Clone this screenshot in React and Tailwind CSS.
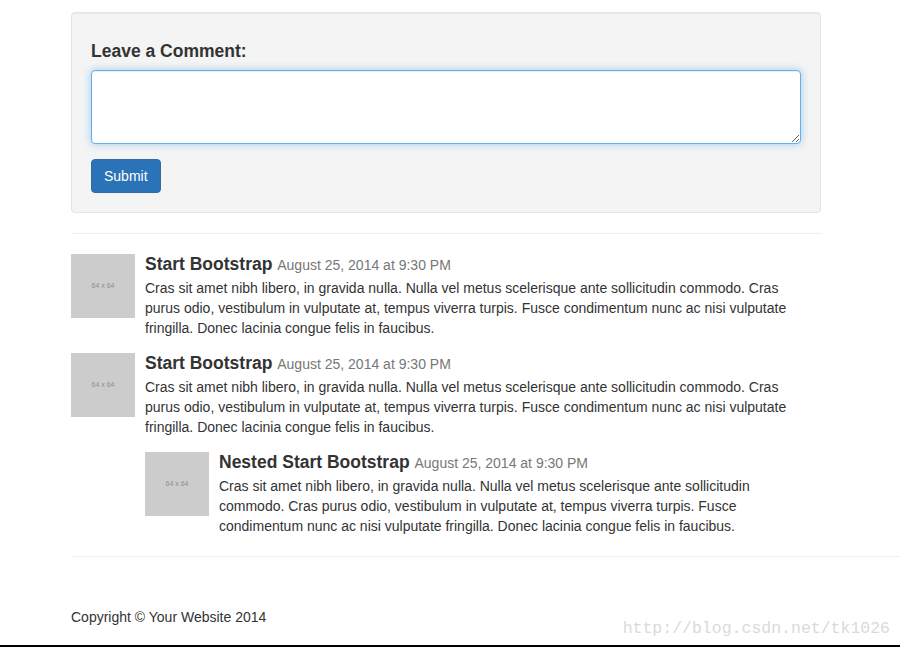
import React from 'react';

const text =
  'Cras sit amet nibh libero, in gravida nulla. Nulla vel metus scelerisque ante sollicitudin commodo. Cras purus odio, vestibulum in vulputate at, tempus viverra turpis. Fusce condimentum nunc ac nisi vulputate fringilla. Donec lacinia congue felis in faucibus.';

function Placeholder() {
  return (
    <div className="w-[64px] h-[64px] shrink-0 bg-[#cccccc] flex items-center justify-center text-[7px] text-[#8e8e8e]">
      64 x 64
    </div>
  );
}

function Comment({ name, children, className = '' }) {
  return (
    <div className={`flex gap-[10px] ${className}`}>
      <Placeholder />
      <div className="flex-1">
        <h4 className="text-[17.5px] leading-[20px] font-bold text-[#333] mb-[3px]">
          {name} <small className="text-[14px] font-normal text-[#777]">August 25, 2014 at 9:30 PM</small>
        </h4>
        <p className="pr-[16px] text-[14px] leading-[20px] text-[#333]">{text}</p>
        {children}
      </div>
    </div>
  );
}

export default function App() {
  return (
    <div
      className="w-[900px] h-[647px] relative overflow-hidden bg-white flex flex-col"
      style={{ fontFamily: '"Liberation Sans", Arial, sans-serif' }}
    >
      <div className="ml-[71px] w-[750px] pt-[12px]">
        {/* Comment form */}
        <div className="bg-[#f4f4f4] border border-[#e3e3e3] rounded-[4px] p-[19px] shadow-[inset_0_1px_1px_rgba(0,0,0,0.05)]">
          <h4 className="mt-[9px] mb-[9px] text-[17.5px] leading-[20px] font-bold text-[#333]">Leave a Comment:</h4>
          <textarea
            rows={3}
            className="block w-full h-[74px] bg-white border border-[#66afe9] rounded-[4px] shadow-[inset_0_1px_1px_rgba(0,0,0,0.075),0_0_8px_rgba(102,175,233,0.6)] outline-none"
          />
          <button className="mt-[15px] h-[34px] px-[12px] bg-[#2a73b6] border border-[#2e6da4] rounded-[4px] text-white text-[14px]">
            Submit
          </button>
        </div>

        <div className="mt-[20px] border-t border-[#eeeeee]" />

        {/* Comments */}
        <div className="mt-[20px]">
          <Comment name="Start Bootstrap" />
          <Comment name="Start Bootstrap" className="mt-[15px]">
            <Comment name="Nested Start Bootstrap" className="mt-[15px]" />
          </Comment>
        </div>
      </div>

      <div className="ml-[71px] mt-[20px] border-t border-[#eeeeee]" />

      <footer className="ml-[71px] mt-[50px] text-[14px] leading-[20px] text-[#333]">
        Copyright © Your Website 2014
      </footer>

      <div className="mt-auto h-[2px] bg-black" />

      <div
        className="absolute right-[10px] bottom-[5px] text-[16.5px] text-[#dcdad6]"
        style={{ fontFamily: '"Liberation Mono", monospace' }}
      >
        http://blog.csdn.net/tk1026
      </div>
    </div>
  );
}
